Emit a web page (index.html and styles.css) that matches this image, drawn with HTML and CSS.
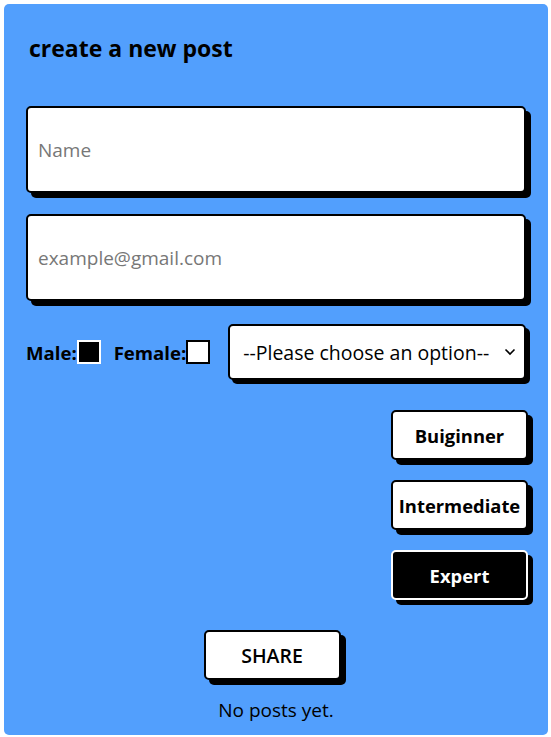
FILE: index.html
```html
<!DOCTYPE html>
<html>
<head>
<meta charset="utf-8">
<link rel="stylesheet" href="styles.css">
</head>
<body>
<div class="card">
  <h2 class="title">create a new post</h2>
  <input class="field" type="text" placeholder="Name">
  <input class="field" type="text" placeholder="example@gmail.com">
  <div class="row">
    <span class="lbl">Male:</span><span class="box box-on"></span>
    <span class="lbl lbl-f">Female:</span><span class="box"></span>
    <div class="select">
      <span>--Please choose an option--</span>
      <svg class="chev" width="12" height="8" viewBox="0 0 12 8"><path d="M1.5 1.5 L6 6 L10.5 1.5" fill="none" stroke="#000" stroke-width="1.6"/></svg>
    </div>
  </div>
  <div class="levels">
    <button class="lvl">Buiginner</button>
    <button class="lvl">Intermediate</button>
    <button class="lvl lvl-dark">Expert</button>
  </div>
  <div class="share-wrap"><button class="share">SHARE</button></div>
  <p class="empty">No posts yet.</p>
</div>
</body>
</html>
```
FILE: styles.css
```css
html, body { margin: 0; padding: 0; background: #fff; }
body { padding: 4px; font-family: "Open Sans", "Noto Sans", sans-serif; }
.card {
  background: #529ffd;
  border-radius: 5px;
  width: 544px;
  height: 731px;
  box-sizing: border-box;
  padding: 22px 22px 0 22px;
}
.title {
  margin: 7px 0 0 3px;
  font-size: 23px;
  font-weight: 700;
  line-height: 30px;
  color: #000;
}
.field {
  display: block;
  box-sizing: border-box;
  width: 500px;
  height: 87px;
  margin-top: 43px;
  border: 2px solid #000;
  border-radius: 5px;
  box-shadow: 5px 5px 0 #000;
  background: #fff;
  padding: 0 10px;
  font-family: inherit;
  font-size: 19px;
  outline: none;
}
.field + .field { margin-top: 21px; }
.field::placeholder { color: #777; }
.row {
  display: flex;
  align-items: center;
  margin-top: 23px;
}
.lbl { font-weight: 700; font-size: 18.6px; }
.lbl-f { margin-left: 13px; }
.box {
  width: 20px; height: 20px;
  border: 2px solid #000;
  background: #fff;
  display: inline-block;
}
.box-on { background: #000; border-color: #fff; }
.select {
  margin-left: 18px;
  box-sizing: border-box;
  width: 299px;
  height: 56px;
  border: 2px solid #000;
  border-radius: 5px;
  box-shadow: 4px 4px 0 #000;
  background: #fff;
  display: flex;
  align-items: center;
  justify-content: space-between;
  padding: 0 8px 0 13px;
  font-size: 19.5px;
}
.levels {
  display: flex;
  flex-direction: column;
  align-items: flex-end;
  gap: 20px;
  margin-top: 30px;
  margin-right: -2px;
}
.lvl, .share {
  box-sizing: border-box;
  width: 137px;
  height: 50px;
  border: 2px solid #000;
  border-radius: 5px;
  box-shadow: 5px 5px 0 #000;
  background: #fff;
  font-family: inherit;
  font-weight: 700;
  font-size: 18.4px;
  color: #000;
  padding: 0;
}
.lvl-dark { background: #000; color: #fff; border-color: #fff; }
.share-wrap { display: flex; justify-content: center; margin-top: 30px; padding-right: 8px; }
.share { font-weight: 600; font-size: 19.5px; }
.empty { text-align: center; margin: 17px 0 0; font-size: 19px; }
```
